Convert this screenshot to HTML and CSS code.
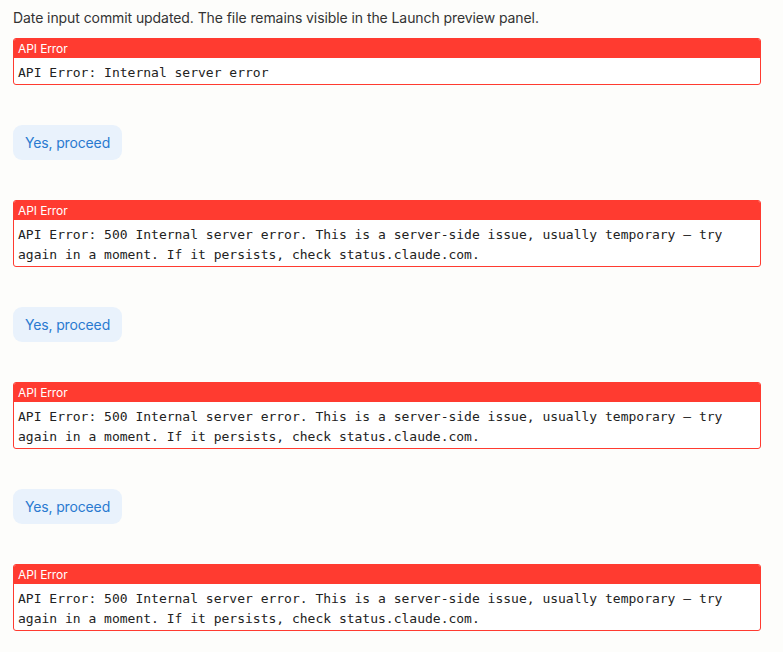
FILE: index.html
```html
<!DOCTYPE html>
<html lang="en">
<head>
    <meta charset="UTF-8">
    <meta name="viewport" content="width=device-width, initial-scale=1.0">
    <title>Chat log</title>
    <link rel="stylesheet" href="styles.css">
</head>
<body>
    <div class="thread">
        <p class="note">Date input commit updated. The file remains visible in the Launch preview panel.</p>

        <div class="error-box">
            <div class="error-head">API Error</div>
            <div class="error-body">API Error: Internal server error</div>
        </div>

        <div class="reply">Yes, proceed</div>

        <div class="error-box">
            <div class="error-head">API Error</div>
            <div class="error-body">API Error: 500 Internal server error. This is a server-side issue, usually temporary — try again in a moment. If it persists, check status.claude.com.</div>
        </div>

        <div class="reply">Yes, proceed</div>

        <div class="error-box">
            <div class="error-head">API Error</div>
            <div class="error-body">API Error: 500 Internal server error. This is a server-side issue, usually temporary — try again in a moment. If it persists, check status.claude.com.</div>
        </div>

        <div class="reply">Yes, proceed</div>

        <div class="error-box">
            <div class="error-head">API Error</div>
            <div class="error-body">API Error: 500 Internal server error. This is a server-side issue, usually temporary — try again in a moment. If it persists, check status.claude.com.</div>
        </div>
    </div>
</body>
</html>
```

FILE: styles.css
```css
body {
    margin: 0;
    padding: 0;
    background-color: #fdfdfb;
    font-family: Inter, "Noto Sans", sans-serif;
    color: #2b2b2b;
}

.thread {
    display: flex;
    flex-direction: column;
    align-items: flex-start;
    gap: 40px;
    padding: 8px 22px 0 13px;
}

.note {
    margin: 0 0 -30px 0;
    font-size: 14px;
    line-height: 20px;
    letter-spacing: -0.08px;
    color: #333;
}

.error-box {
    align-self: stretch;
    border: 1px solid #ff3b30;
    border-radius: 3px;
    background-color: #fff;
    overflow: hidden;
}

.error-head {
    background-color: #ff3b30;
    color: #fff;
    font-size: 12px;
    line-height: 19px;
    letter-spacing: -0.1px;
    padding: 0 4px;
}

.error-body {
    font-family: "DejaVu Sans Mono", "Liberation Mono", monospace;
    font-size: 13px;
    line-height: 20px;
    color: #222;
    padding: 5px 4px 1px 4px;
}

.reply {
    background-color: #e9f2fc;
    color: #2a7ad0;
    font-size: 14px;
    line-height: 35px;
    letter-spacing: -0.15px;
    padding: 0 12px;
    border-radius: 9px;
}
```
